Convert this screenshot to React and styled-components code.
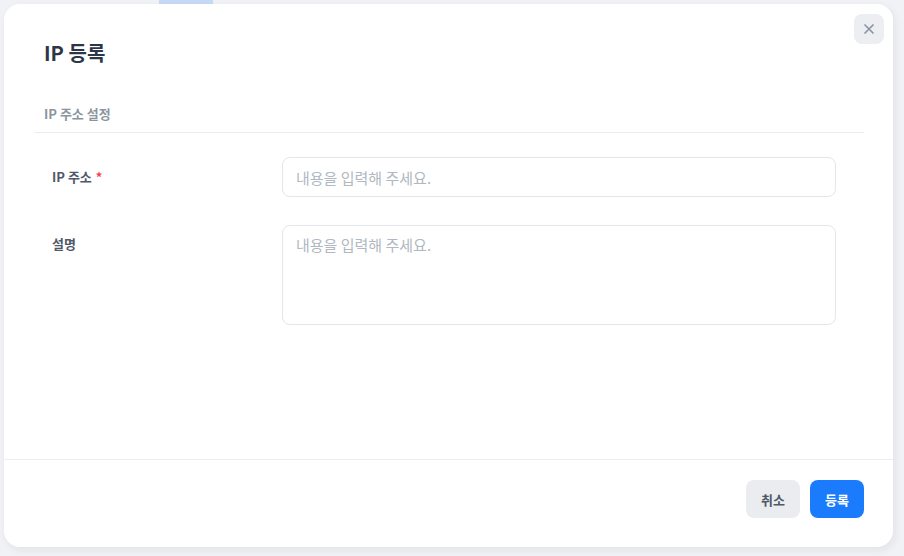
import React from 'react';
import styled, { createGlobalStyle } from 'styled-components';

const GlobalStyle = createGlobalStyle`
  * { box-sizing: border-box; }
  body {
    margin: 0;
    background: #f1f2f5;
    font-family: "Noto Sans CJK KR", "Noto Sans", sans-serif;
  }
`;

const Page = styled.div`
  position: relative;
  width: 904px;
  height: 556px;
  padding: 4px 11px 9px 4px;
  display: flex;
  overflow: hidden;
`;

const BackTab = styled.div`
  position: absolute;
  top: 0;
  left: 159px;
  width: 54px;
  height: 4px;
  background: #c6d9f6;
`;

const BackMark = styled.div`
  position: absolute;
  top: 103px;
  left: 7px;
  width: 2px;
  height: 12px;
  background: #d9d6d0;
`;

const Modal = styled.div`
  position: relative;
  flex: 1;
  display: flex;
  flex-direction: column;
  background: #fff;
  border-radius: 16px;
  box-shadow: 2px 3px 8px rgba(20, 30, 60, 0.07);
`;

const Header = styled.div`
  padding: 35px 40px 0;
`;

const Title = styled.h2`
  margin: 0;
  font-size: 20px;
  line-height: 28px;
  font-weight: 700;
  color: #2d3648;
`;

const CloseButton = styled.button`
  position: absolute;
  top: 10px;
  right: 9px;
  width: 30px;
  height: 30px;
  border: none;
  border-radius: 8px;
  background: #eceef2;
  display: flex;
  align-items: center;
  justify-content: center;
  padding: 0;
  cursor: pointer;
`;

const Body = styled.div`
  flex: 1;
  padding: 38px 29px 0 30px;
`;

const SectionTitle = styled.div`
  padding: 0 10px 9px;
  font-size: 13px;
  line-height: 18px;
  font-weight: 600;
  color: #8b95a1;
  border-bottom: 1px solid #eaecef;
`;

const Fields = styled.div`
  display: flex;
  flex-direction: column;
  gap: 28px;
  padding: 24px 28px 0 18px;
`;

const Row = styled.div`
  display: grid;
  grid-template-columns: 230px 1fr;
  align-items: ${(p) => (p.$top ? 'start' : 'center')};
`;

const Label = styled.label`
  font-size: 13px;
  line-height: 18px;
  font-weight: 700;
  color: #4e5968;
  padding-top: ${(p) => (p.$top ? '10px' : '0')};
`;

const Required = styled.span`
  color: #f04452;
  margin-left: 4px;
`;

const Input = styled.input`
  height: 40px;
  width: 100%;
  border: 1px solid #e3e6ea;
  border-radius: 8px;
  padding: 0 13px;
  font-family: inherit;
  font-size: 15px;
  color: #333d4b;
  outline: none;
  &::placeholder { color: #b0b8c1; }
`;

const TextArea = styled.textarea`
  height: 100px;
  width: 100%;
  border: 1px solid #e3e6ea;
  border-radius: 8px;
  padding: 8px 13px;
  font-family: inherit;
  font-size: 15px;
  line-height: 22px;
  color: #333d4b;
  resize: none;
  outline: none;
  &::placeholder { color: #b0b8c1; }
`;

const Footer = styled.div`
  display: flex;
  justify-content: flex-end;
  gap: 10px;
  padding: 20px 29px 29px;
  border-top: 1px solid #eceef1;
`;

const Button = styled.button`
  width: 54px;
  height: 38px;
  border: none;
  border-radius: 8px;
  font-family: inherit;
  font-size: 13px;
  font-weight: 700;
  cursor: pointer;
  background: ${(p) => (p.$primary ? '#1a7bfd' : '#ebecf0')};
  color: ${(p) => (p.$primary ? '#fff' : '#4e5968')};
`;

export default function App() {
  return (
    <>
      <GlobalStyle />
      <Page>
        <BackTab />
        <BackMark />
        <Modal>
          <Header>
            <Title>IP 등록</Title>
          </Header>
          <CloseButton aria-label="닫기">
            <svg width="12" height="12" viewBox="0 0 12 12">
              <path d="M2 2 L10 10 M10 2 L2 10" stroke="#8b95a1" strokeWidth="1.7" strokeLinecap="round" />
            </svg>
          </CloseButton>
          <Body>
            <SectionTitle>IP 주소 설정</SectionTitle>
            <Fields>
              <Row>
                <Label>IP 주소<Required>*</Required></Label>
                <Input placeholder="내용을 입력해 주세요." />
              </Row>
              <Row $top>
                <Label $top>설명</Label>
                <TextArea placeholder="내용을 입력해 주세요." />
              </Row>
            </Fields>
          </Body>
          <Footer>
            <Button>취소</Button>
            <Button $primary>등록</Button>
          </Footer>
        </Modal>
      </Page>
    </>
  );
}
